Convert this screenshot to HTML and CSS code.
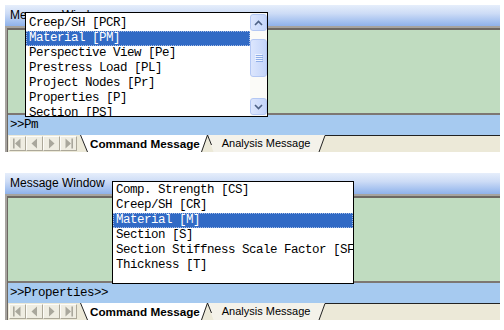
FILE: index.html
```html
<!DOCTYPE html>
<html>
<head>
<meta charset="utf-8">
<title>Message Window</title>
<link rel="stylesheet" href="styles.css">
</head>
<body>
<div class="panel">
  <div class="title">Message Window</div>
  <div class="frame"><div class="inner">
    <div class="well"></div>
    <div class="cmd">&gt;&gt;Pm</div>
    <div class="tabs">
      <div class="nav">
        <span class="nb"><svg width="15" height="13" viewBox="0 0 15 13"><rect x="3" y="1.5" width="1.6" height="10" fill="#a9a79c"/><path d="M10.5 1.5 L5 6.5 L10.5 11.5 Z" fill="#a9a79c"/></svg></span>
        <span class="nb"><svg width="15" height="13" viewBox="0 0 15 13"><path d="M10 1.5 L4.5 6.5 L10 11.5 Z" fill="#a9a79c"/></svg></span>
        <span class="nb"><svg width="15" height="13" viewBox="0 0 15 13"><path d="M5 1.5 L10.5 6.5 L5 11.5 Z" fill="#a9a79c"/></svg></span>
        <span class="nb"><svg width="15" height="13" viewBox="0 0 15 13"><path d="M4.5 1.5 L10 6.5 L4.5 11.5 Z" fill="#a9a79c"/><rect x="10.4" y="1.5" width="1.6" height="10" fill="#a9a79c"/></svg></span>
      </div>
      <svg class="edge e1" width="10" height="17" viewBox="0 0 10 17"><path d="M0 0 L10 0 L10 17 L7.5 17 Z" fill="#fff"/><path d="M0.5 0 L7.5 17" stroke="#222" stroke-width="1" fill="none"/></svg>
      <div class="tab active">Command Message</div>
      <svg class="edge e2" width="21" height="17" viewBox="0 0 21 17"><path d="M0 0 L6 0 L0 17 Z" fill="#fff"/><path d="M6.5 0 L21 0 L21 17 L12.5 17 Z" fill="#f4f2ea"/><path d="M0.5 17 L6.5 0 L10.5 10" stroke="#222" stroke-width="1" fill="none"/></svg>
      <div class="tab">Analysis Message</div>
      <svg class="edge e3" width="10" height="17" viewBox="0 0 10 17"><path d="M0 0 L7 0 L1 17 L0 17 Z" fill="#f4f2ea"/><path d="M1 17 L7 0.5 L10 0.5" stroke="#222" stroke-width="1" fill="none"/></svg>
      <div class="rest"></div>
    </div>
  </div></div>
  <div class="popup p1">
    <div class="list">
      <div class="item">Creep/SH [PCR]</div>
      <div class="item sel">Material [PM]</div>
      <div class="item">Perspective View [Pe]</div>
      <div class="item">Prestress Load [PL]</div>
      <div class="item">Project Nodes [Pr]</div>
      <div class="item">Properties [P]</div>
      <div class="item">Section [PS]</div>
    </div>
    <div class="sb">
      <div class="sbtn up"><svg width="9" height="6" viewBox="0 0 9 6"><path d="M1 5 L4.5 1.5 L8 5" stroke="#4d6185" stroke-width="1.6" fill="none"/></svg></div>
      <div class="sbtn thumb"><svg width="8" height="8" viewBox="0 0 8 8"><path d="M0 0.5 H7 M0 2.5 H7 M0 4.5 H7 M0 6.5 H7" stroke="#eef3fe" stroke-width="1"/><path d="M1 1.5 H8 M1 3.5 H8 M1 5.5 H8 M1 7.5 H8" stroke="#8faee8" stroke-width="1"/></svg></div>
      <div class="sbtn down"><svg width="9" height="6" viewBox="0 0 9 6"><path d="M1 1 L4.5 4.5 L8 1" stroke="#4d6185" stroke-width="1.6" fill="none"/></svg></div>
    </div>
  </div>
</div>

<div class="panel">
  <div class="title">Message Window</div>
  <div class="frame"><div class="inner">
    <div class="well"></div>
    <div class="cmd">&gt;&gt;Properties&gt;&gt;</div>
    <div class="tabs">
      <div class="nav">
        <span class="nb"><svg width="15" height="13" viewBox="0 0 15 13"><rect x="3" y="1.5" width="1.6" height="10" fill="#a9a79c"/><path d="M10.5 1.5 L5 6.5 L10.5 11.5 Z" fill="#a9a79c"/></svg></span>
        <span class="nb"><svg width="15" height="13" viewBox="0 0 15 13"><path d="M10 1.5 L4.5 6.5 L10 11.5 Z" fill="#a9a79c"/></svg></span>
        <span class="nb"><svg width="15" height="13" viewBox="0 0 15 13"><path d="M5 1.5 L10.5 6.5 L5 11.5 Z" fill="#a9a79c"/></svg></span>
        <span class="nb"><svg width="15" height="13" viewBox="0 0 15 13"><path d="M4.5 1.5 L10 6.5 L4.5 11.5 Z" fill="#a9a79c"/><rect x="10.4" y="1.5" width="1.6" height="10" fill="#a9a79c"/></svg></span>
      </div>
      <svg class="edge e1" width="10" height="17" viewBox="0 0 10 17"><path d="M0 0 L10 0 L10 17 L7.5 17 Z" fill="#fff"/><path d="M0.5 0 L7.5 17" stroke="#222" stroke-width="1" fill="none"/></svg>
      <div class="tab active">Command Message</div>
      <svg class="edge e2" width="21" height="17" viewBox="0 0 21 17"><path d="M0 0 L6 0 L0 17 Z" fill="#fff"/><path d="M6.5 0 L21 0 L21 17 L12.5 17 Z" fill="#f4f2ea"/><path d="M0.5 17 L6.5 0 L10.5 10" stroke="#222" stroke-width="1" fill="none"/></svg>
      <div class="tab">Analysis Message</div>
      <svg class="edge e3" width="10" height="17" viewBox="0 0 10 17"><path d="M0 0 L7 0 L1 17 L0 17 Z" fill="#f4f2ea"/><path d="M1 17 L7 0.5 L10 0.5" stroke="#222" stroke-width="1" fill="none"/></svg>
      <div class="rest"></div>
    </div>
  </div></div>
  <div class="popup p2">
    <div class="list">
      <div class="item">Comp. Strength [CS]</div>
      <div class="item">Creep/SH [CR]</div>
      <div class="item sel">Material [M]</div>
      <div class="item">Section [S]</div>
      <div class="item">Section Stiffness Scale Factor [SF]</div>
      <div class="item">Thickness [T]</div>
    </div>
  </div>
</div>
</body>
</html>
```

FILE: styles.css
```css
* { box-sizing: border-box; }
html, body { margin: 0; background: #fff; }
body {
  padding: 5px 4px 0 5px;
  font-family: "Liberation Sans", Arial, sans-serif;
}
.panel { position: relative; width: 495px; }
.panel + .panel { margin-top: 21px; }

.title {
  height: 21px;
  line-height: 21px;
  padding-left: 5px;
  font-size: 12px;
  color: #000;
  background: linear-gradient(#e6eefb, #cddcf6 40%, #a3c0ef 80%, #8fb1ea);
}
.frame { border-top: 2px solid #a6a39f; border-left: 2px solid #a6a39f; }
.inner { border-top: 2px solid #6d6863; border-left: 1px solid #6d6863; }
.well {
  height: 85px;
  background: #c0dcc0;
  border-bottom: 2px solid #7d7772;
}
.cmd {
  height: 20px;
  line-height: 20px;
  padding-left: 2px;
  background: #a6caf0;
  font-family: "Liberation Mono", "Courier New", monospace;
  font-size: 12.5px;
  letter-spacing: -0.5px;
  color: #000;
}

.tabs {
  display: flex;
  height: 17px;
  background: #ece9d8;
  font-size: 11px;
  line-height: 17px;
  color: #000;
}
.nav { display: flex; padding: 1px 3px 0 1px; }
.nb {
  display: flex;
  align-items: center;
  justify-content: center;
  width: 17px;
  height: 15px;
  border: 1px solid;
  border-color: #fdfcf8 #aca899 #aca899 #fdfcf8;
  background: #efede2;
}
.edge { display: block; flex: none; }
.tab { padding: 0 8px 0 0; background: #f4f2ea; white-space: nowrap; }
.tab.active { background: #fff; font-weight: bold; font-size: 11.7px; padding: 0 1px 0 0; }
.rest { flex: 1; border-top: 1px solid #222; }

.popup {
  position: absolute;
  display: flex;
  border: 1px solid #000;
  background: #fff;
  font-family: "Liberation Mono", "Courier New", monospace;
  font-size: 12.5px;
  letter-spacing: -0.5px;
  line-height: 15px;
  color: #000;
  overflow: hidden;
}
.p1 { left: 20px; top: 7px; width: 243px; height: 105px; }
.p2 { left: 107px; top: 8px; width: 242px; height: 103px; }
.list { flex: 1; min-width: 0; overflow: hidden; }
.p1 .list { padding-top: 3px; }
.p2 .list { padding-top: 1px; }
.item { height: 15px; padding-left: 3px; white-space: nowrap; }
.item.sel {
  background: #316ac5;
  color: #fff;
  outline: 1px dotted #a8bde4;
  outline-offset: -1px;
}

.sb {
  width: 17px;
  flex: none;
  display: flex;
  flex-direction: column;
  background: #fbfbf8;
  padding: 1px 0;
}
.sbtn {
  display: flex;
  align-items: center;
  justify-content: center;
  height: 17px;
  border: 1px solid #b4c8f4;
  border-radius: 3px;
  background: linear-gradient(90deg, #dce6fd, #c4d5fa);
}
.thumb { height: 38px; margin-top: 8px; }
.down { margin-top: auto; }
```
